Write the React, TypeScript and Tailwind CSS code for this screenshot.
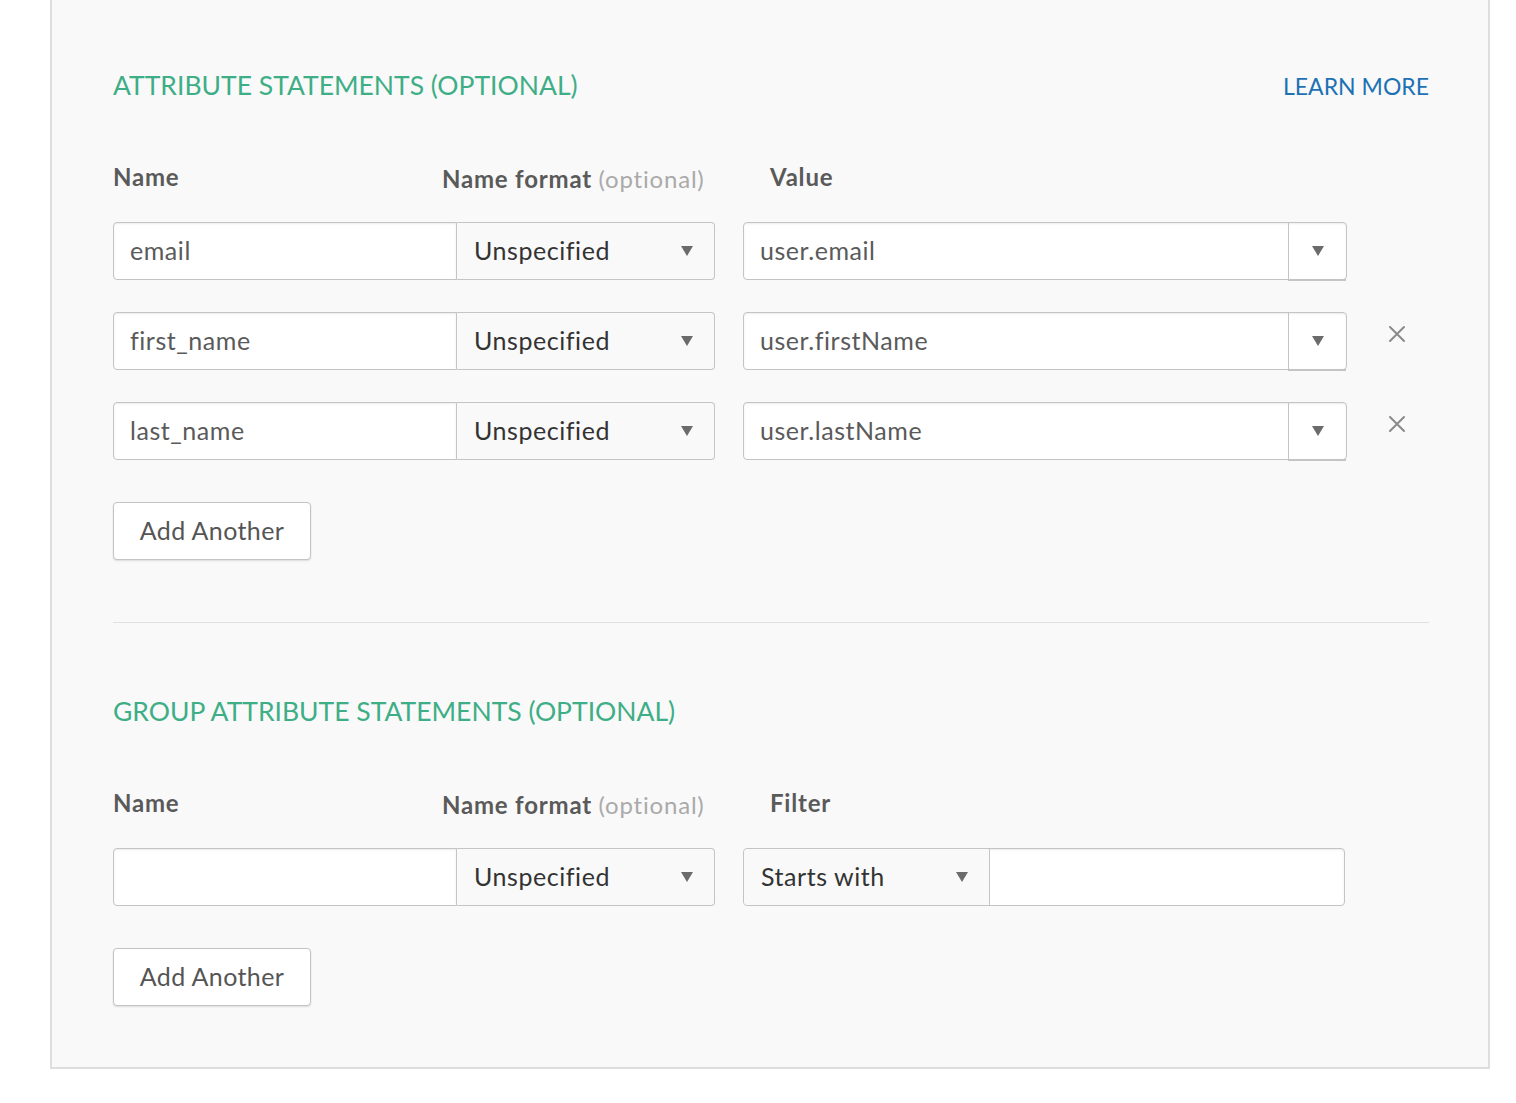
import React from "react";

const font = { fontFamily: "Lato, 'Open Sans', Arial, sans-serif" };

function Caret() {
  return (
    <svg width="12" height="10" viewBox="0 0 12 10" className="shrink-0">
      <path d="M0 0 L12 0 L6 10 Z" fill="#6b6b6b" />
    </svg>
  );
}

function CloseIcon() {
  return (
    <svg width="18" height="18" viewBox="0 0 18 18">
      <path d="M2 2 L16 16 M16 2 L2 16" stroke="#8a8a8a" strokeWidth="2" strokeLinecap="round" />
    </svg>
  );
}

function FormatSelect() {
  return (
    <div className="flex h-full w-[258px] items-center justify-between rounded-r-[4px] border border-l-0 border-[#c4c4c4] bg-[#f9f9f9] pl-[17px] pr-[21px] text-[25px] tracking-[0.55px] text-[#333]">
      <span>Unspecified</span>
      <Caret />
    </div>
  );
}

function NameInput({ value }: { value: string }) {
  return (
    <div className="flex h-full w-[344px] items-center rounded-l-[4px] border border-[#c4c4c4] bg-white pl-[16px] text-[25px] tracking-[0.55px] text-[#5a5a5a] shadow-[inset_0_1px_2px_rgba(0,0,0,.08)]">
      {value}
    </div>
  );
}

function AttrRow({ name, value, removable }: { name: string; value: string; removable?: boolean }) {
  return (
    <div className="flex h-[58px] items-stretch">
      <NameInput value={name} />
      <FormatSelect />
      <div className="ml-[28px] flex w-[604px] rounded-[4px] border border-[#c4c4c4] bg-white shadow-[inset_0_1px_2px_rgba(0,0,0,.08)]">
        <div className="flex flex-1 items-center pl-[16px] text-[25px] tracking-[0.55px] text-[#5a5a5a]">{value}</div>
        <div className="flex w-[58px] items-center justify-center border-l border-[#c4c4c4] shadow-[0_2px_0_#c4c4c4]">
          <Caret />
        </div>
      </div>
      {removable && (
        <div className="ml-[41px] flex items-start pt-[13px]">
          <CloseIcon />
        </div>
      )}
    </div>
  );
}

function AddButton() {
  return (
    <button className="h-[58px] w-[198px] rounded-[4px] border border-[#c4c4c4] bg-white text-[25px] tracking-[0.4px] text-[#555] shadow-[0_1px_2px_rgba(0,0,0,.12)]">
      Add Another
    </button>
  );
}

function Labels({ third }: { third: string }) {
  return (
    <div className="flex h-[30px] items-center text-[24px] font-bold tracking-[0.8px] text-[#5a5a5a]">
      <div className="w-[329px]">Name</div>
      <div className="w-[328px] pt-[3px]">
        Name format <span className="font-normal text-[#aaa]">(optional)</span>
      </div>
      <div>{third}</div>
    </div>
  );
}

export default function App() {
  return (
    <div className="min-h-[1103px] bg-white" style={font}>
      <div className="ml-[50px] w-[1440px] border-x-2 border-b-2 border-[#dedede] bg-[#f9f9f9] pb-[61px] pl-[61px] pr-[59px] pt-[70px]">
        {/* Attribute statements */}
        <div className="flex h-[32px] items-center justify-between">
          <h2 className="text-[26.5px] text-[#3eae86]">ATTRIBUTE STATEMENTS (OPTIONAL)</h2>
          <a className="text-[23px] text-[#1d72b5]">LEARN MORE</a>
        </div>

        <div className="mt-[60px]">
          <Labels third="Value" />
        </div>

        <div className="mt-[30px] flex flex-col gap-[32px]">
          <AttrRow name="email" value="user.email" />
          <AttrRow name="first_name" value="user.firstName" removable />
          <AttrRow name="last_name" value="user.lastName" removable />
        </div>

        <div className="mt-[42px]">
          <AddButton />
        </div>

        <div className="mt-[62px] h-px bg-[#e0e0e0]" />

        {/* Group attribute statements */}
        <div className="mt-[73px] flex h-[32px] items-center">
          <h2 className="text-[26.5px] text-[#3eae86]">GROUP ATTRIBUTE STATEMENTS (OPTIONAL)</h2>
        </div>

        <div className="mt-[60px]">
          <Labels third="Filter" />
        </div>

        <div className="mt-[30px] flex h-[58px] items-stretch">
          <NameInput value="" />
          <FormatSelect />
          <div className="ml-[28px] flex w-[602px] rounded-[4px] border border-[#c4c4c4] bg-white shadow-[inset_0_1px_2px_rgba(0,0,0,.08)]">
            <div className="flex w-[246px] items-center justify-between rounded-l-[4px] border-r border-[#c4c4c4] bg-[#f9f9f9] pl-[17px] pr-[21px] text-[25px] tracking-[0.55px] text-[#333]">
              <span>Starts with</span>
              <Caret />
            </div>
            <div className="flex-1" />
          </div>
        </div>

        <div className="mt-[42px]">
          <AddButton />
        </div>
      </div>
    </div>
  );
}
